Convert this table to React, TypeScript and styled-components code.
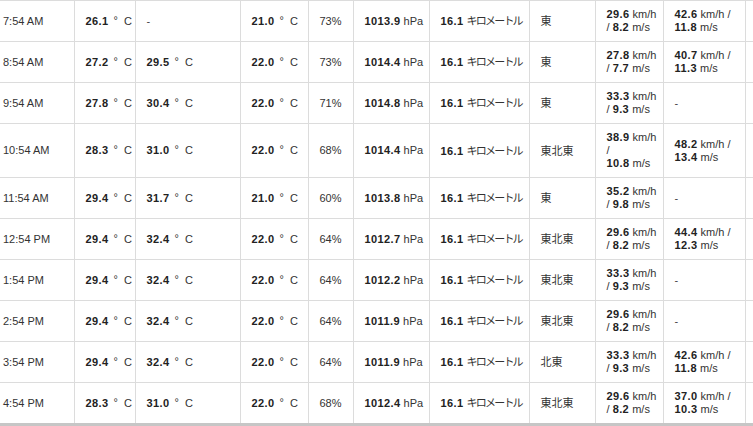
import styled, { createGlobalStyle } from 'styled-components';

interface Reading {
  time: string;
  temp: string;
  feels: string | null;
  dew: string;
  humidity: string;
  pressure: string;
  visibility: string;
  direction: string;
  wind: string[];
  gust: string[] | null;
}

const readings: Reading[] = [
  { time: '7:54 AM', temp: '26.1', feels: null, dew: '21.0', humidity: '73%', pressure: '1013.9', visibility: '16.1', direction: '東', wind: ['29.6 km/h', '/ 8.2 m/s'], gust: ['42.6 km/h /', '11.8 m/s'] },
  { time: '8:54 AM', temp: '27.2', feels: '29.5', dew: '22.0', humidity: '73%', pressure: '1014.4', visibility: '16.1', direction: '東', wind: ['27.8 km/h', '/ 7.7 m/s'], gust: ['40.7 km/h /', '11.3 m/s'] },
  { time: '9:54 AM', temp: '27.8', feels: '30.4', dew: '22.0', humidity: '71%', pressure: '1014.8', visibility: '16.1', direction: '東', wind: ['33.3 km/h', '/ 9.3 m/s'], gust: null },
  { time: '10:54 AM', temp: '28.3', feels: '31.0', dew: '22.0', humidity: '68%', pressure: '1014.4', visibility: '16.1', direction: '東北東', wind: ['38.9 km/h', '/', '10.8 m/s'], gust: ['48.2 km/h /', '13.4 m/s'] },
  { time: '11:54 AM', temp: '29.4', feels: '31.7', dew: '21.0', humidity: '60%', pressure: '1013.8', visibility: '16.1', direction: '東', wind: ['35.2 km/h', '/ 9.8 m/s'], gust: null },
  { time: '12:54 PM', temp: '29.4', feels: '32.4', dew: '22.0', humidity: '64%', pressure: '1012.7', visibility: '16.1', direction: '東北東', wind: ['29.6 km/h', '/ 8.2 m/s'], gust: ['44.4 km/h /', '12.3 m/s'] },
  { time: '1:54 PM', temp: '29.4', feels: '32.4', dew: '22.0', humidity: '64%', pressure: '1012.2', visibility: '16.1', direction: '東北東', wind: ['33.3 km/h', '/ 9.3 m/s'], gust: null },
  { time: '2:54 PM', temp: '29.4', feels: '32.4', dew: '22.0', humidity: '64%', pressure: '1011.9', visibility: '16.1', direction: '東北東', wind: ['29.6 km/h', '/ 8.2 m/s'], gust: null },
  { time: '3:54 PM', temp: '29.4', feels: '32.4', dew: '22.0', humidity: '64%', pressure: '1011.9', visibility: '16.1', direction: '北東', wind: ['33.3 km/h', '/ 9.3 m/s'], gust: ['42.6 km/h /', '11.8 m/s'] },
  { time: '4:54 PM', temp: '28.3', feels: '31.0', dew: '22.0', humidity: '68%', pressure: '1012.4', visibility: '16.1', direction: '東北東', wind: ['29.6 km/h', '/ 8.2 m/s'], gust: ['37.0 km/h /', '10.3 m/s'] },
];

const columnWidths = [74, 61, 105, 68, 45, 76, 100, 66, 68, 82, 60];

// bold every number inside a string, keep units normal
const withNumbers = (text: string) =>
  text.split(/(\d+(?:\.\d+)?)/).map((part, i) =>
    /^\d/.test(part) ? <Num key={i}>{part}</Num> : <span key={i}>{part}</span>
  );

const Degrees = ({ value }: { value: string | null }) => {
  if (!value) return <Dash>-</Dash>;
  return (
    <>
      <Num>{value}</Num>
      <Deg>°</Deg>C
    </>
  );
};

const Lines = ({ lines }: { lines: string[] | null }) => {
  if (!lines) return <Dash>-</Dash>;
  return (
    <>
      {lines.map((line) => (
        <Line key={line}>{withNumbers(line)}</Line>
      ))}
    </>
  );
};

const App = () => {
  return (
    <>
      <GlobalStyle />
      <Page>
        <Table>
          <colgroup>
            {columnWidths.map((w, i) => (
              <col key={i} style={{ width: w }} />
            ))}
          </colgroup>
          <tbody>
            {readings.map((r) => (
              <Row key={r.time}>
                <Cell $first>{r.time}</Cell>
                <Cell><Degrees value={r.temp} /></Cell>
                <Cell><Degrees value={r.feels} /></Cell>
                <Cell><Degrees value={r.dew} /></Cell>
                <Cell>{r.humidity}</Cell>
                <Cell>
                  <Num>{r.pressure}</Num> hPa
                </Cell>
                <Cell>
                  <Num>{r.visibility}</Num> <Kana>キロメートル</Kana>
                </Cell>
                <Cell>
                  <Kanji>{r.direction}</Kanji>
                </Cell>
                <Cell><Lines lines={r.wind} /></Cell>
                <Cell><Lines lines={r.gust} /></Cell>
                <Cell />
              </Row>
            ))}
          </tbody>
        </Table>
      </Page>
    </>
  );
};

export default App;

const GlobalStyle = createGlobalStyle`
  html, body {
    margin: 0;
    padding: 0;
    background: #ffffff;
    overflow: hidden;
  }
  body {
    font-family: "Liberation Sans", "Noto Sans CJK JP", Arial, sans-serif;
    font-size: 11px;
    color: #333333;
  }
`;

const Page = styled.div`
  width: 753px;
  height: 426px;
  overflow: hidden;
`;

const Table = styled.table`
  border-collapse: collapse;
  table-layout: fixed;
  width: 785px;
  border-top: 1px solid #dcdcdc;
`;

const Row = styled.tr`
  &:last-child td {
    border-bottom: 3px solid #c6c6c6;
  }
`;

const Cell = styled.td<{ $first?: boolean }>`
  height: 26px;
  padding: 7px 4px 7px ${(p) => (p.$first ? '3px' : '11px')};
  line-height: 13px;
  vertical-align: middle;
  white-space: nowrap;
  border-bottom: 1px solid #dcdcdc;
  border-left: ${(p) => (p.$first ? 'none' : '1px solid #dcdcdc')};
  color: #333333;
`;

const Num = styled.b`
  font-weight: bold;
  letter-spacing: 0.4px;
  color: #222222;
`;

const Deg = styled.span`
  display: inline-block;
  margin: 0 6px 0 5px;
  position: relative;
  top: -1px;
`;

const Dash = styled.span`
  color: #444444;
`;

const Line = styled.div`
  white-space: nowrap;
`;

const Kana = styled.span`
  font-family: "Noto Sans CJK JP", sans-serif;
  font-size: 11px;
  letter-spacing: -1.8px;
`;

const Kanji = styled.span`
  font-family: "Noto Sans CJK JP", sans-serif;
  font-size: 11px;
  letter-spacing: 0px;
`;
